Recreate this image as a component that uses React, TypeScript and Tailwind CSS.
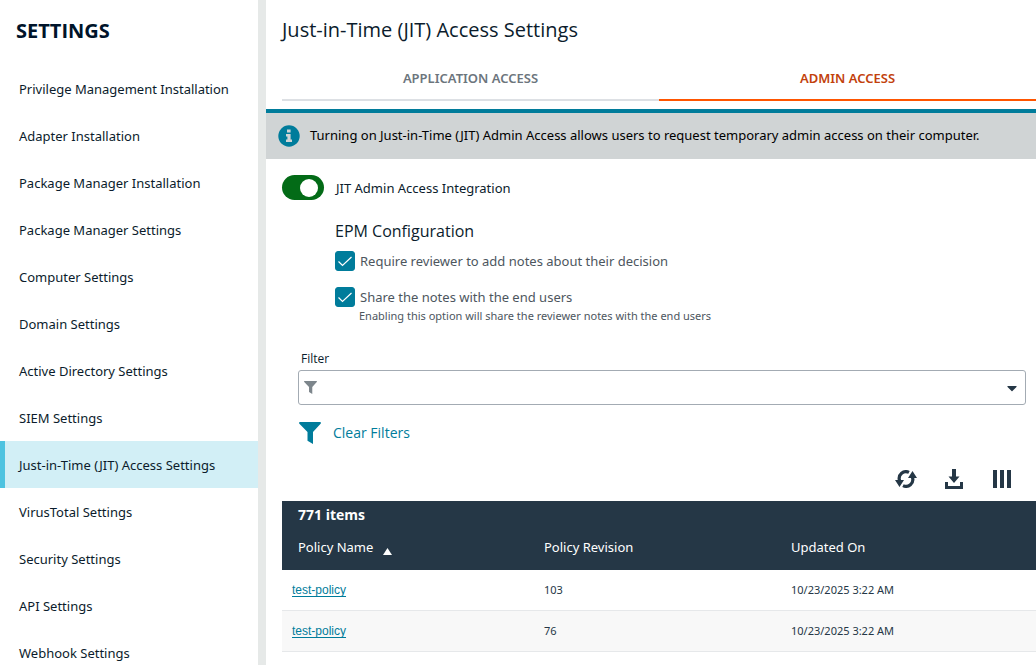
import { useState } from 'react';
import { FaCaretDown } from 'react-icons/fa';

const navItems = [
  'Privilege Management Installation',
  'Adapter Installation',
  'Package Manager Installation',
  'Package Manager Settings',
  'Computer Settings',
  'Domain Settings',
  'Active Directory Settings',
  'SIEM Settings',
  'Just-in-Time (JIT) Access Settings',
  'VirusTotal Settings',
  'Security Settings',
  'API Settings',
  'Webhook Settings',
];

const policies = [
  { id: 1, name: 'test-policy', revision: 103, updated: '10/23/2025 3:22 AM' },
  { id: 2, name: 'test-policy', revision: 76, updated: '10/23/2025 3:22 AM' },
];

function InfoIcon() {
  return (
    <svg viewBox="0 0 22 22" className="size-[22px] shrink-0" aria-hidden="true">
      <circle cx="11" cy="11" r="10.7" fill="#007c9b" />
      <path d="M9 4.5h3.6v3H9zM8 9h4.6v5.5H14V17H8v-2.5h1.4v-3H8z" fill="#d0d4d5" />
    </svg>
  );
}

function FunnelIcon({ className }: { className: string }) {
  return (
    <svg viewBox="0 0 22 22" className={className} fill="currentColor" aria-hidden="true">
      <path d="M.6 0h20.8q.9.800.200 1.800L14 10v12l-5.500-3.300V10L.4 1.800Q-.3.800.6 0z" />
    </svg>
  );
}

function RefreshIcon() {
  return (
    <svg viewBox="0 0 22 18" className="h-[18px] w-[22px]" aria-hidden="true">
      <g fill="none" stroke="#253746" strokeWidth="3.200">
        <path d="M4.500 10.500A6.800 6.800 0 0 1 14 2.400" />
        <path d="M17.500 7.500A6.800 6.800 0 0 1 8 15.600" />
      </g>
      <path d="M0 10h9l-4.500 7zM22 8h-9l4.500-7z" fill="#253746" />
    </svg>
  );
}

function DownloadIcon() {
  return (
    <svg viewBox="0 0 18 20" className="h-5 w-[18px]" fill="#253746" aria-hidden="true">
      <path d="M7 0h4v7.500h3.500L9 14 3.500 7.500H7z" />
      <path d="M0 13h3v4h12v-4h3v7H0z" />
    </svg>
  );
}

function ColumnsIcon() {
  return (
    <svg viewBox="0 0 18 18" className="size-[18px]" fill="#253746" aria-hidden="true">
      <path d="M0 0h4v18H0zM7 0h4v18H7zM14 0h4v18h-4z" />
    </svg>
  );
}

type CheckOptionProps = {
  id: string;
  label: string;
};

function CheckOption({ id, label }: CheckOptionProps) {
  const [checked, setChecked] = useState(true);

  return (
    <div className="flex items-center gap-[5px]">
      <span className="relative flex size-5 shrink-0">
        <input
          id={id}
          type="checkbox"
          checked={checked}
          onChange={(e) => setChecked(e.target.checked)}
          className="size-5 appearance-none rounded-[3px] border border-[#007c9b] checked:bg-[#007c9b]"
        />
        {checked && (
          <svg viewBox="0 0 20 20" className="pointer-events-none absolute inset-0 size-5" aria-hidden="true">
            <path d="M3.500 10.500l4 4L16.500 6" fill="none" stroke="#fff" strokeWidth="1.200" />
          </svg>
        )}
      </span>
      <label htmlFor={id} className="text-[13px] leading-5 text-[#4d565e]">
        {label}
      </label>
    </div>
  );
}

export default function App() {
  const [enabled, setEnabled] = useState(true);

  return (
    <div className="flex h-screen overflow-hidden bg-white font-['Noto_Sans','Open_Sans',sans-serif] text-[#0b1c2c]">
      {/* Sidebar */}
      <aside className="w-[266px] shrink-0 border-r-8 border-[#e6e9e8]">
        <h2 className="px-4 pt-4 pb-[19px] font-['Open_Sans',sans-serif] text-xl leading-[30px] font-bold text-[#00142a]">
          SETTINGS
        </h2>
        <nav>
          {navItems.map((item) => {
            const active = item === 'Just-in-Time (JIT) Access Settings';
            return (
              <a
                key={item}
                href="#"
                className={`flex h-[47px] items-center border-l-5 pt-0.5 pl-3.5 text-[13px] ${
                  active ? 'border-[#4ec3e0] bg-[#d2eff6]' : 'border-transparent'
                }`}
              >
                {item}
              </a>
            );
          })}
        </nav>
      </aside>

      <main className="min-w-0 flex-1">
        <h1 className="pt-4 pl-4 font-['Open_Sans',sans-serif] text-xl leading-7">Just-in-Time (JIT) Access Settings</h1>

        {/* Tabs */}
        <div role="tablist" className="mt-3 ml-4 flex text-[13px] font-semibold">
          <button role="tab" aria-selected="false" className="h-[45px] flex-1 border-b-2 border-[#dde0e4] pt-0.5 text-[#6c757d]">
            APPLICATION ACCESS
          </button>
          <button role="tab" aria-selected="true" className="h-[45px] flex-1 border-b-2 border-[#ff5500] pt-0.5 text-[#c2410c]">
            ADMIN ACCESS
          </button>
        </div>

        <div className="mt-2 flex h-[50px] items-center gap-2.5 border-t-4 border-[#007c9b] bg-[#d0d4d5] pl-3 text-[13px] text-black">
          <InfoIcon />
          <p>Turning on Just-in-Time (JIT) Admin Access allows users to request temporary admin access on their computer.</p>
        </div>

        <div className="mt-4 ml-4 flex items-center gap-3">
          <span className="relative flex h-[25px] w-[42px] shrink-0">
            <input
              id="jit-integration"
              type="checkbox"
              role="switch"
              checked={enabled}
              onChange={(e) => setEnabled(e.target.checked)}
              className="peer h-full w-full appearance-none rounded-full bg-gray-400 checked:bg-[#036b17]"
            />
            <span className="pointer-events-none absolute top-1 left-1 size-[18px] rounded-full bg-white peer-checked:left-[18px]" />
          </span>
          <label htmlFor="jit-integration" className="text-[13px] leading-5">
            JIT Admin Access Integration
          </label>
        </div>

        <section className="mt-5 ml-[69px]">
          <h2 className="font-['Open_Sans',sans-serif] text-base leading-[22px]">EPM Configuration</h2>
          <div className="mt-[9px] flex flex-col gap-4">
            <CheckOption id="require-notes" label="Require reviewer to add notes about their decision" />
            <CheckOption id="share-notes" label="Share the notes with the end users" />
          </div>
          <p className="pl-6 text-[11px] leading-[18px] text-[#4d565e]">
            Enabling this option will share the reviewer notes with the end users
          </p>
        </section>

        {/* Filter */}
        <div className="mt-6 mr-2.5 ml-8 font-['Open_Sans',sans-serif]">
          <label htmlFor="filter" className="block pl-[3px] text-xs leading-5">
            Filter
          </label>
          <div className="relative mt-px flex items-center">
            <select id="filter" className="h-[35px] w-full appearance-none rounded-[3px] border border-[#a3abb3] bg-white pl-8 text-sm">
              <option value=""></option>
            </select>
            <FunnelIcon className="pointer-events-none absolute left-1.5 size-[13px] text-[#7d868c]" />
            <FaCaretDown className="pointer-events-none absolute right-1.5 size-4 text-[#253746]" />
          </div>
          <button className="mt-4 ml-px flex items-center gap-3 text-sm leading-6 text-[#007c9b]">
            <FunnelIcon className="size-[22px]" />
            Clear Filters
          </button>
        </div>

        <div className="mt-[18px] mr-[25px] flex h-8 items-center justify-end gap-7">
          <button aria-label="Refresh">
            <RefreshIcon />
          </button>
          <button aria-label="Download">
            <DownloadIcon />
          </button>
          <button aria-label="Choose columns" className="pl-0.5">
            <ColumnsIcon />
          </button>
        </div>

        {/* Policies */}
        <div className="mt-1.5 ml-4">
          <div className="h-7 bg-[#253746] pl-4 font-['Open_Sans',sans-serif] text-sm leading-7 font-bold text-white">
            771 items
          </div>
          <table className="w-full table-fixed border-separate border-spacing-0 text-left">
            <thead className="bg-[#253746] text-[13px] text-white">
              <tr className="h-[41px]">
                <th className="w-[246px] pb-1 pl-4 font-normal" aria-sort="ascending">
                  Policy Name
                  <svg viewBox="0 0 9 7" className="ml-2.5 inline h-[7px] w-[9px] align-[-3px]" fill="#fff" aria-hidden="true">
                    <path d="M4.500 0L9 7H0z" />
                  </svg>
                </th>
                <th className="w-[247px] pb-1 pl-4 font-normal">Policy Revision</th>
                <th className="pb-1 pl-4 font-normal">Updated On</th>
              </tr>
            </thead>
            <tbody className="text-[11px] text-[#253746] [&_td]:border-b [&_td]:border-[#e6e8ea]">
              {policies.map((policy) => (
                <tr key={policy.id} className="h-[41px] even:bg-[#f8f8f8]">
                  <td className="pl-2.5 font-['Liberation_Sans',sans-serif] text-xs">
                    <a href="#" className="text-[#007c9b] underline underline-offset-2">
                      {policy.name}
                    </a>
                  </td>
                  <td className="pt-px pl-4">{policy.revision}</td>
                  <td className="pt-px pl-4">{policy.updated}</td>
                </tr>
              ))}
            </tbody>
          </table>
        </div>
      </main>
    </div>
  );
}
